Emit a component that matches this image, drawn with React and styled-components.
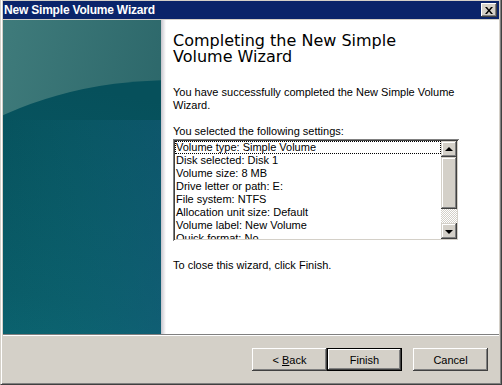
import React from 'react';
import styled, { createGlobalStyle } from 'styled-components';

const GlobalStyle = createGlobalStyle`
  html, body {
    margin: 0;
    padding: 0;
    background: #d4d0c8;
  }
  body {
    font-family: "Liberation Sans", Arial, sans-serif;
    font-size: 11px;
    color: #000;
  }
`;

const Window = styled.div`
  width: 502px;
  height: 385px;
  box-sizing: border-box;
  background: #d4d0c8;
  border-left: 1px solid #d4d0c8;
  border-right: 1px solid #404040;
  border-bottom: 1px solid #404040;
  box-shadow: inset 1px 0 #ffffff, inset -1px -1px #808080;
  padding: 1px 2px 2px 2px;
  display: flex;
  flex-direction: column;
  overflow: hidden;
`;

const TitleBar = styled.div`
  height: 18px;
  background: #0a246a;
  display: flex;
  align-items: center;
  justify-content: space-between;
  padding: 0 2px 0 1px;
`;

const Title = styled.span`
  color: #fff;
  font-family: "Liberation Sans", Arial, sans-serif;
  font-weight: bold;
  font-size: 12px;
  letter-spacing: -0.2px;
`;

const CloseButton = styled.div`
  width: 16px;
  height: 14px;
  box-sizing: border-box;
  background: #d4d0c8;
  box-shadow: inset -1px -1px #404040, inset 1px 1px #ffffff,
    inset -2px -2px #808080, inset 2px 2px #d4d0c8;
  display: flex;
  align-items: center;
  justify-content: center;
`;

const Body = styled.div`
  margin-top: 1px;
  height: 314px;
  background: #fff;
  display: flex;
  border-bottom: 1px solid #808080;
  box-shadow: 0 1px #ffffff;
`;

const SidePanel = styled.div`
  width: 158px;
  flex: none;
  position: relative;
  svg {
    display: block;
  }
  &::after {
    content: '';
    position: absolute;
    top: 0;
    right: -5px;
    width: 5px;
    height: 100%;
    background: linear-gradient(to right, #c6c4cc, #ffffff);
  }
`;

const Main = styled.div`
  flex: 1;
  padding: 13px 0 0 12px;
  display: flex;
  flex-direction: column;
`;

const Heading = styled.h1`
  margin: 0;
  font-family: "DejaVu Sans", Verdana, sans-serif;
  font-weight: normal;
  font-size: 16px;
  line-height: 16px;
  width: 250px;
`;

const Text = styled.p`
  margin: ${({ top }) => top || 0}px 0 0 0;
  line-height: 13px;
  width: 290px;
`;

const ListBox = styled.div`
  margin-top: 1px;
  width: 286px;
  height: 102px;
  box-sizing: border-box;
  display: flex;
  background: #fff;
  box-shadow: inset 1px 1px #808080, inset -1px -1px #ffffff,
    inset 2px 2px #404040, inset -2px -2px #d4d0c8;
  padding: 2px;
  overflow: hidden;
`;

const Items = styled.div`
  flex: 1;
  overflow: hidden;
`;

const Item = styled.div`
  height: 13px;
  line-height: 13px;
  padding-left: 1px;
  white-space: nowrap;
  box-sizing: border-box;
  outline: ${({ focused }) => (focused ? '1px dotted #000' : 'none')};
  outline-offset: -1px;
`;

const ScrollBar = styled.div`
  width: 16px;
  flex: none;
  display: flex;
  flex-direction: column;
`;

const ArrowButton = styled.div`
  width: 16px;
  height: 16px;
  flex: none;
  box-sizing: border-box;
  background: #d4d0c8;
  box-shadow: inset -1px -1px #404040, inset 1px 1px #d4d0c8,
    inset -2px -2px #808080, inset 2px 2px #ffffff;
  display: flex;
  align-items: center;
  justify-content: center;
`;

const Arrow = styled.span`
  width: 0;
  height: 0;
  border-left: 4px solid transparent;
  border-right: 4px solid transparent;
  ${({ down }) =>
    down ? 'border-top: 4px solid #000;' : 'border-bottom: 4px solid #000;'}
  margin-top: ${({ down }) => (down ? '1px' : '-1px')};
`;

const Thumb = styled.div`
  height: 52px;
  flex: none;
  box-sizing: border-box;
  background: #d4d0c8;
  box-shadow: inset -1px -1px #404040, inset 1px 1px #d4d0c8,
    inset -2px -2px #808080, inset 2px 2px #ffffff;
`;

const Track = styled.div`
  flex: 1;
  background: repeating-conic-gradient(#d4d0c8 0 25%, #ffffff 0 50%) 0 0 / 2px 2px;
`;

const Footer = styled.div`
  flex: 1;
  display: flex;
  justify-content: flex-end;
  align-items: flex-start;
  padding: 13px 11px 0 0;
`;

const Button = styled.button`
  width: 75px;
  height: 23px;
  margin-left: ${({ gap }) => gap || 0}px;
  border: none;
  background: #d4d0c8;
  font-family: "Liberation Sans", Arial, sans-serif;
  font-size: 11px;
  color: #000;
  padding: 0;
  box-shadow: ${({ isDefault }) =>
    isDefault
      ? 'inset 0 0 0 1px #000, inset -2px -2px #404040, inset 2px 2px #ffffff, inset -3px -3px #808080'
      : 'inset -1px -1px #404040, inset 1px 1px #ffffff, inset -2px -2px #808080'};
  u {
    text-decoration: underline;
  }
`;

const settings = [
  'Volume type: Simple Volume',
  'Disk selected: Disk 1',
  'Volume size: 8 MB',
  'Drive letter or path: E:',
  'File system: NTFS',
  'Allocation unit size: Default',
  'Volume label: New Volume',
  'Quick format: No',
];

const PanelArt = () => (
  <svg width="158" height="314" viewBox="0 0 158 314">
    <defs>
      <linearGradient id="top" x1="0" y1="0" x2="1" y2="0.4">
        <stop offset="0" stopColor="#3f7b7b" />
        <stop offset="1" stopColor="#2c676a" />
      </linearGradient>
      <linearGradient id="low" x1="0.3" y1="0" x2="0" y2="1">
        <stop offset="0" stopColor="#06505b" />
        <stop offset="0.5" stopColor="#0a5c68" />
        <stop offset="1" stopColor="#0f7482" />
      </linearGradient>
      <linearGradient id="shade" x1="0" y1="0" x2="1" y2="0">
        <stop offset="0" stopColor="#0f7a84" stopOpacity="0" />
        <stop offset="1" stopColor="#1a5f86" stopOpacity="0.35" />
      </linearGradient>
    </defs>
    <rect width="158" height="314" fill="url(#top)" />
    <ellipse cx="170" cy="260" rx="300" ry="200" fill="url(#low)" />
    <rect y="100" width="158" height="214" fill="url(#shade)" />
  </svg>
);

const App = () => (
  <>
    <GlobalStyle />
    <Window>
      <TitleBar>
        <Title>New Simple Volume Wizard</Title>
        <CloseButton>
          <svg width="8" height="7" viewBox="0 0 8 7">
            <path d="M0 0h2l2 2.5L6 0h2L5 3.5 8 7H6L4 4.5 2 7H0l3-3.5z" fill="#000" />
          </svg>
        </CloseButton>
      </TitleBar>
      <Body>
        <SidePanel>
          <PanelArt />
        </SidePanel>
        <Main>
          <Heading>Completing the New Simple Volume Wizard</Heading>
          <Text top={21}>
            You have successfully completed the New Simple Volume Wizard.
          </Text>
          <Text top={13}>You selected the following settings:</Text>
          <ListBox>
            <Items>
              {settings.map((s, i) => (
                <Item key={s} focused={i === 0}>
                  {s}
                </Item>
              ))}
            </Items>
            <ScrollBar>
              <ArrowButton>
                <Arrow />
              </ArrowButton>
              <Thumb />
              <Track />
              <ArrowButton>
                <Arrow down />
              </ArrowButton>
            </ScrollBar>
          </ListBox>
          <Text top={18}>To close this wizard, click Finish.</Text>
        </Main>
      </Body>
      <Footer>
        <Button>
          &lt; <u>B</u>ack
        </Button>
        <Button isDefault>Finish</Button>
        <Button gap={11}>Cancel</Button>
      </Footer>
    </Window>
  </>
);

export default App;
